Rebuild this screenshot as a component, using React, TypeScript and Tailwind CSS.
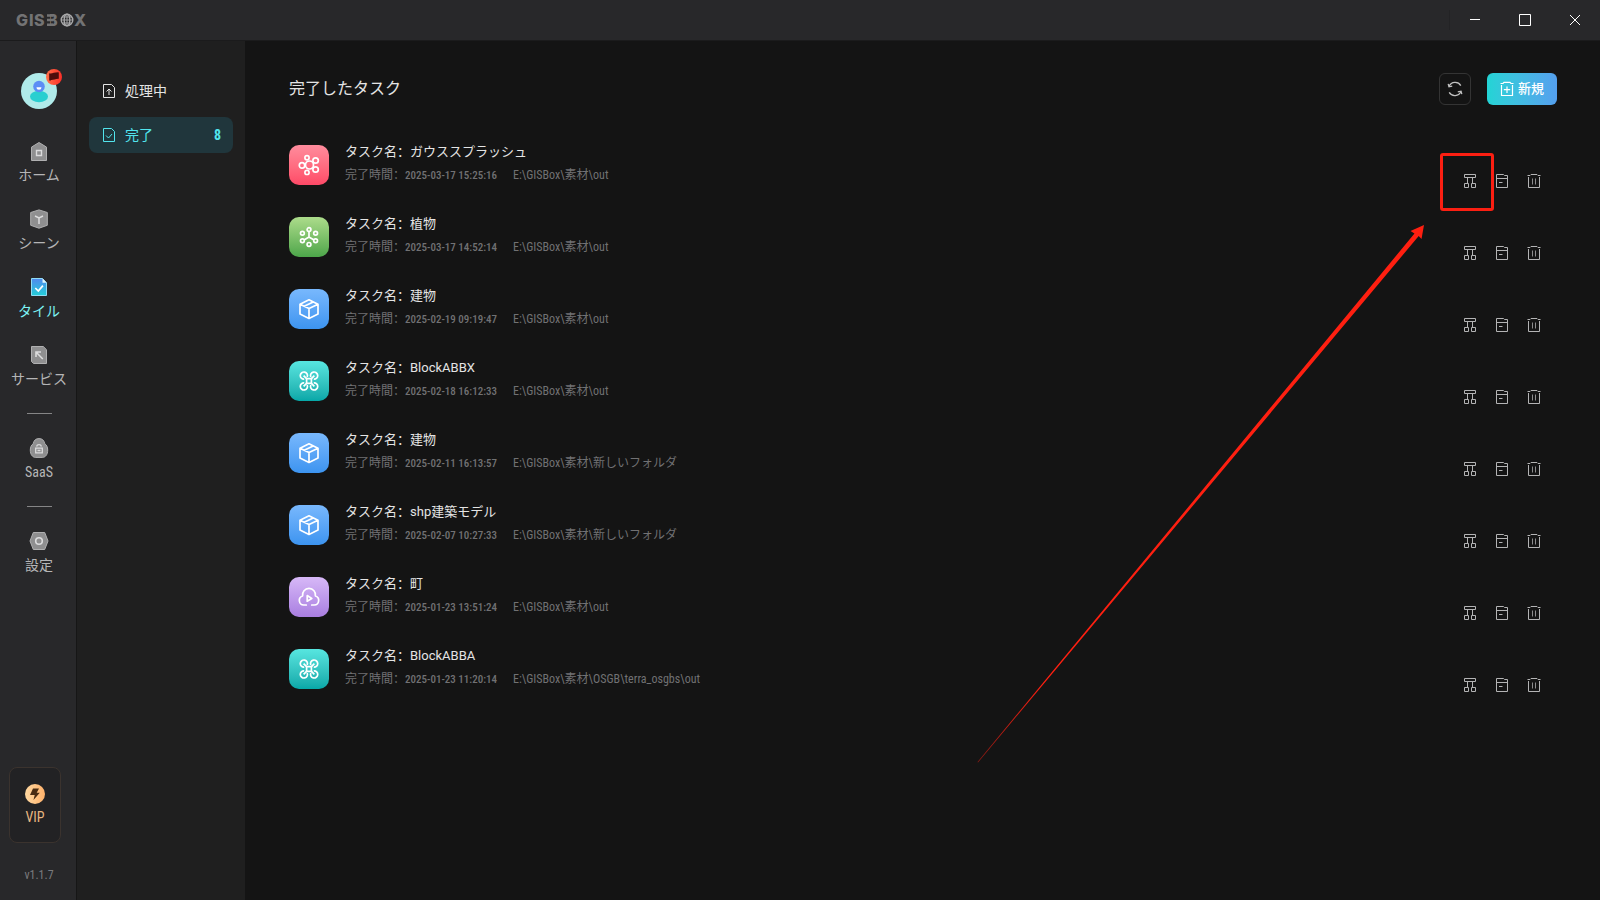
import React, { useState } from "react";

type TaskKind = "splat" | "plant" | "box" | "drone" | "cloud";

const TASKS: { id: number; kind: TaskKind; name: string; time: string; path: string }[] = [
  { id: 1, kind: "splat", name: "ガウススプラッシュ", time: "2025-03-17 15:25:16", path: "E:\\GISBox\\素材\\out" },
  { id: 2, kind: "plant", name: "植物", time: "2025-03-17 14:52:14", path: "E:\\GISBox\\素材\\out" },
  { id: 3, kind: "box", name: "建物", time: "2025-02-19 09:19:47", path: "E:\\GISBox\\素材\\out" },
  { id: 4, kind: "drone", name: "BlockABBX", time: "2025-02-18 16:12:33", path: "E:\\GISBox\\素材\\out" },
  { id: 5, kind: "box", name: "建物", time: "2025-02-11 16:13:57", path: "E:\\GISBox\\素材\\新しいフォルダ" },
  { id: 6, kind: "box", name: "shp建築モデル", time: "2025-02-07 10:27:33", path: "E:\\GISBox\\素材\\新しいフォルダ" },
  { id: 7, kind: "cloud", name: "町", time: "2025-01-23 13:51:24", path: "E:\\GISBox\\素材\\out" },
  { id: 8, kind: "drone", name: "BlockABBA", time: "2025-01-23 11:20:14", path: "E:\\GISBox\\素材\\OSGB\\terra_osgbs\\out" },
];

const KIND_BG: Record<TaskKind, string> = {
  splat: "from-[#ff8c9d] to-[#fe4967]",
  plant: "from-[#acdc8b] to-[#4ca64a]",
  box: "from-[#78b8fd] to-[#3c94f0]",
  drone: "from-[#57e6e0] to-[#05a8a8]",
  cloud: "from-[#d7b8f7] to-[#a97ee0]",
};

function KindIcon({ kind }: { kind: TaskKind }) {
  return (
    <svg viewBox="0 0 24 24" className="w-6 h-6" fill="none" stroke="#fff" strokeWidth="1.7" strokeLinejoin="round" aria-hidden="true">
      {kind === "splat" && (
        <>
          <circle cx="12.5" cy="12" r="4" />
          <circle cx="5" cy="12.4" r="2.7" />
          <circle cx="10" cy="4.8" r="2.1" />
          <circle cx="18.6" cy="7.5" r="2.7" />
          <circle cx="18.6" cy="16.5" r="2.7" />
          <circle cx="10" cy="19.4" r="2.1" />
        </>
      )}
      {kind === "plant" && (
        <>
          <circle cx="12" cy="4.6" r="1.9" />
          <circle cx="5.4" cy="8.2" r="1.9" />
          <circle cx="18.6" cy="8.2" r="1.9" />
          <circle cx="5.4" cy="15.8" r="1.9" />
          <circle cx="18.6" cy="15.8" r="1.9" />
          <circle cx="12" cy="19.4" r="1.9" />
          <path d="M12 6.5V12M12 12l-5 2.9M12 12l5 2.9" />
        </>
      )}
      {kind === "box" && (
        <path d="M12 2.8l9 4.4v9.8l-9 4.4-9-4.4V7.2zM3 7.2l9 4.2 9-4.2M12 11.4v10M7.2 9.2l9-4.3" />
      )}
      {kind === "drone" && (
        <>
          <path d="M9.6 9.6h4.8v4.8H9.6z" />
          <path d="M9.6 9.6L6.6 6.6M14.4 9.6l3-3M9.6 14.4l-3 3M14.4 14.4l3 3" />
          <path d="M10.2 8A3.6 3.6 0 1 0 7.2 10.2M13.8 8a3.6 3.6 0 1 1 3 2.2M10.2 16a3.6 3.6 0 1 1-3-2.2M13.8 16a3.6 3.6 0 1 0 3-2.2" />
        </>
      )}
      {kind === "cloud" && (
        <>
          <path d="M9.3 20H6.8A4.6 4.6 0 0 1 5.6 11a6.5 6.5 0 1 1 12.8 0 4.6 4.6 0 0 1-1.2 9h-2.5" strokeLinecap="round" />
          <path d="M10.2 10.6v5.6l4.6-2.8z" />
        </>
      )}
    </svg>
  );
}

function Logo() {
  return (
    <svg width="80" height="24" viewBox="0 0 80 24" role="img" aria-label="GISBOX">
      <g fill="#737374" fontFamily="Inter, sans-serif" fontWeight="800" fontSize="16">
        <text x="4" y="18">G</text>
        <text x="17" y="18">I</text>
        <text x="22" y="18">S</text>
        <text x="35" y="18">B</text>
        <text x="62" y="18">X</text>
      </g>
      {/* The B has no stem in the logo */}
      <path d="M34 5h4v14h-4z" fill="#28282a" />
      <g stroke="#737374" strokeWidth="2.4">
        <path d="M35 7.500h6M35 12h6M35 16.800h6" />
      </g>
      <circle cx="55" cy="12" r="7" fill="#28282a" />
      <g fill="none" stroke="#a8a8a9" strokeWidth="1.4">
        <circle cx="55" cy="12" r="5.800" />
        <ellipse cx="55" cy="12" rx="2.800" ry="5.800" />
        <path d="M55 6.200v11.600M49.200 12h11.600M50.200 9h9.600M50.200 15h9.600" strokeWidth="0.900" />
      </g>
    </svg>
  );
}

function RailIcon({ name }: { name: string }) {
  return (
    <svg width="20" height="20" viewBox="0 0 20 20" fill="none" aria-hidden="true">
      {name === "home" && (
        <>
          <path d="M10 1.500l7.500 4.600v13.400h-15V6.100z" fill="#8f8f90" stroke="#b0b0b1" />
          <path d="M7.500 9.500h5v5h-5z" stroke="#dcdcdd" strokeWidth="1.400" />
        </>
      )}
      {name === "scene" && (
        <>
          <path d="M10 .9l8.300 2.600v12.800L10 19.200l-8.300-2.900V3.500z" fill="#8f8f90" stroke="#b0b0b1" />
          <path d="M6 7l4 2 4-2M10 9v6" stroke="#dcdcdd" strokeWidth="1.500" />
        </>
      )}
      {name === "tile" && (
        <>
          <defs>
            <linearGradient id="tileFill" x1="0" y1="0" x2="0" y2="1">
              <stop offset="0" stopColor="#5189ee" />
              <stop offset="1" stopColor="#24cfd8" />
            </linearGradient>
          </defs>
          <path d="M2.500 1.500h11l4 4.200v12.800h-15z" fill="url(#tileFill)" stroke="#8fdcf5" />
          <path d="M13.500 1.500l4 4.200h-4z" fill="#e2f7fd" />
          <path d="M6.300 11l3 3 4.600-5.400" stroke="#fff" strokeWidth="1.700" />
        </>
      )}
      {name === "service" && (
        <>
          <path d="M2.500 1.500h11.800l3.200 3.200v13.800h-13l-2-2z" fill="#8f8f90" stroke="#b0b0b1" />
          <path d="M7 12V7h5M7.200 7.200l6.600 6.800" stroke="#dcdcdd" strokeWidth="1.600" />
        </>
      )}
      {name === "saas" && (
        <>
          <path d="M10 .6c3.400 0 5.200 2 5.700 5 2 1.500 3 3.500 3 6.400 0 4.600-2.300 7.400-5.200 7.400h-7c-2.900 0-5.200-2.800-5.200-7.400 0-2.900 1-4.900 3-6.400C4.800 2.600 6.600.6 10 .6z" fill="#8f8f90" stroke="#b0b0b1" />
          <path d="M6.700 10.200h6.600v4.600H6.700zM7.600 8.500c.5-2.400 4.300-2.400 4.800 0M8.500 12.500h3" stroke="#dcdcdd" strokeWidth="1.300" />
        </>
      )}
      {name === "settings" && (
        <>
          <path d="M4.300 1.500h11.400L19 10l-3.300 8.500H4.300L1 10z" fill="#8f8f90" stroke="#b0b0b1" />
          <circle cx="10" cy="10" r="3.300" stroke="#dcdcdd" strokeWidth="1.600" />
        </>
      )}
    </svg>
  );
}

function RailItem({ icon, label, active = false }: { icon: string; label: string; active?: boolean }) {
  return (
    <a href="#" className={`flex h-12 flex-col items-center gap-1 text-sm leading-5 whitespace-nowrap ${active ? "text-[#7df3f5]" : "text-[#b5b5b6]"}`}>
      <RailIcon name={icon} />
      <span>{label}</span>
    </a>
  );
}

function TreeIcon() {
  return (
    <svg width="12" height="14" viewBox="0 0 12 14" fill="none" stroke="currentColor" aria-hidden="true">
      <path d="M.5.5h11v3H.5zM3.500 3.500v6M8.500 3.500v6M.5 9.500h4v4h-4zM7.500 9.500h4v4h-4z" />
    </svg>
  );
}

function FileIcon() {
  return (
    <svg width="12" height="14" viewBox="0 0 12 14" fill="none" stroke="currentColor" aria-hidden="true">
      <path d="M.5.5h7l1 1h3v12H.5zM.5 4.500h11M3 8.500h3.500" />
    </svg>
  );
}

function TrashIcon() {
  return (
    <svg width="14" height="16" viewBox="0 0 14 16" fill="none" stroke="currentColor" aria-hidden="true">
      <path d="M.5 2.500h2.500L4 1.500h6l1 1h2.500M1.500 4v10.500h11V4" />
      <path d="M5.500 5.500v6M8.500 5.500v6" opacity=".75" />
    </svg>
  );
}

function AddIcon() {
  return (
    <svg width="14" height="16" viewBox="0 0 14 16" fill="none" stroke="#fff" strokeWidth="1.200" aria-hidden="true">
      <path d="M.5 2.500h2.500L4 1.400h6l1 1.100h2.500M1.500 4v10.500h11V4M7 5.500v6.500M3.800 8.700h6.400" />
    </svg>
  );
}

function RefreshIcon() {
  return (
    <svg width="16" height="16" viewBox="0 0 16 16" fill="none" stroke="#c2c2c2" strokeWidth="1.300" aria-hidden="true">
      <path d="M2 5.500C4.300.3 11.200.2 13.800 4.600M14 10.500C11.700 15.700 4.800 15.800 2.200 11.400" />
      <path d="M1.200 2.800l.8 3 3.200-.6M14.800 13.200l-.8-3-3.200.6" />
    </svg>
  );
}

export default function App() {
  const [tab, setTab] = useState("done");

  const tabClass = (id: string) =>
    `flex h-9 w-full items-center gap-2.5 rounded-lg pl-3.5 pr-3 text-sm ${
      tab === id ? "bg-[#20363c] text-[#52e5ee]" : "text-[#e4e4e4]"
    }`;

  return (
    <div className="flex min-h-screen flex-col bg-[#141414] font-['Roboto_Condensed','Noto_Sans_CJK_SC',sans-serif] text-[#e4e4e4]">
      {/* Title bar */}
      <header className="flex h-[41px] items-center justify-between border-b border-[#1b1b1c] bg-[#28282a] pl-3">
        <Logo />
        <div className="flex items-center">
          <div className="h-5 w-px bg-[#232325]" />
          <button aria-label="最小化" className="flex h-10 w-[50px] items-center justify-center">
            <svg width="12" height="12" viewBox="0 0 12 12" stroke="#fff"><path d="M1 5.500h10" /></svg>
          </button>
          <button aria-label="最大化" className="flex h-10 w-[50px] items-center justify-center">
            <svg width="12" height="12" viewBox="0 0 12 12" fill="none" stroke="#fff"><path d="M.5.5h11v11H.5z" /></svg>
          </button>
          <button aria-label="閉じる" className="flex h-10 w-[50px] items-center justify-center">
            <svg width="12" height="12" viewBox="0 0 12 12" stroke="#fff"><path d="M1 1l10 10M11 1L1 11" /></svg>
          </button>
        </div>
      </header>

      <div className="flex flex-1">
        {/* Main navigation */}
        <nav className="flex w-[77px] shrink-0 flex-col items-center border-r border-[#161616] bg-[#28282a] pt-8 pl-0.5">
          <button aria-label="アカウント" className="relative mb-8 size-9">
            <svg width="36" height="36" viewBox="0 0 36 36" aria-hidden="true">
              <circle cx="18" cy="18" r="18" fill="#b0ebea" />
              <ellipse cx="18" cy="23.500" rx="9" ry="5.800" fill="#29cfd0" />
              <circle cx="18" cy="13.500" r="5.800" fill="#5c8df5" />
              <path d="M15.500 14.300h5a2.500 2.500 0 0 1-5 0z" fill="#fff" />
            </svg>
            <svg className="absolute -top-1 -right-[5px]" width="16" height="16" viewBox="0 0 16 16" aria-hidden="true">
              <defs>
                <linearGradient id="flagFill">
                  <stop offset="0" stopColor="#ff7048" />
                  <stop offset="1" stopColor="#fb2f28" />
                </linearGradient>
              </defs>
              <circle cx="8" cy="8" r="8" fill="url(#flagFill)" />
              <path d="M3.200 4.300c3 .8 5-1.200 9.600-.9v6.400c-3.600-.2-5.600 1.700-8.300 1.200v1.200l-1.300-1z" fill="#4c0d0c" />
            </svg>
          </button>
          <div className="flex flex-col items-center gap-5">
            <RailItem icon="home" label="ホーム" />
            <RailItem icon="scene" label="シーン" />
            <RailItem icon="tile" label="タイル" active />
            <RailItem icon="service" label="サービス" />
            <div className="mb-1 h-px w-[25px] bg-[#858586]" />
            <RailItem icon="saas" label="SaaS" />
            <div className="mb-1 h-px w-[25px] bg-[#858586]" />
            <RailItem icon="settings" label="設定" />
          </div>
          <div className="mt-auto mb-[17px] flex w-full flex-col px-[7px]">
            <button className="flex h-[76px] w-[52px] flex-col items-center justify-center gap-1 rounded-lg border border-[#3b332e] bg-[#222224] text-sm leading-[18px] text-[#e8b681]">
              <svg width="20" height="20" viewBox="0 0 20 20" aria-hidden="true">
                <defs>
                  <linearGradient id="vipFill">
                    <stop offset="0" stopColor="#ffd9a2" />
                    <stop offset="1" stopColor="#ffb16a" />
                  </linearGradient>
                </defs>
                <circle cx="10" cy="10" r="10" fill="url(#vipFill)" />
                <path d="M8 4.500h6l-2.300 4.200h3.100L8.500 16l1.200-5H5z" fill="#4a2c12" />
              </svg>
              VIP
            </button>
            <span className="mt-6 text-center text-xs text-[#7b7b7e]">v1.1.7</span>
          </div>
        </nav>

        {/* Task status tabs */}
        <aside className="flex w-[168px] shrink-0 flex-col gap-2 bg-[#1f1f1f] px-3 pt-8">
          <button onClick={() => setTab("processing")} className={tabClass("processing")}>
            <svg width="12" height="14" viewBox="0 0 12 14" fill="none" stroke="currentColor" aria-hidden="true">
              <path d="M.5.5h8l3 3v10H.5zM6 11V5.500M3.500 7.500L6 5l2.500 2.500" />
            </svg>
            処理中
          </button>
          <button onClick={() => setTab("done")} className={tabClass("done")}>
            <svg width="12" height="14" viewBox="0 0 12 14" fill="none" stroke="currentColor" aria-hidden="true">
              <path d="M.5.5h8l3 3v10H.5zM3 7.500l2.500 2.500L9 6" />
            </svg>
            完了
            <span className="ml-auto font-bold">8</span>
          </button>
        </aside>

        {/* Completed tasks */}
        <main className="relative min-w-0 flex-1 pt-8 pr-[43px] pl-11">
          <div className="flex items-center justify-between">
            <h1 className="text-base">完了したタスク</h1>
            <div className="flex gap-4">
              <button aria-label="更新" className="flex size-8 items-center justify-center rounded-md border border-[#343434]">
                <RefreshIcon />
              </button>
              <button className="flex h-8 w-[70px] items-center justify-center gap-1 rounded-md bg-linear-to-r from-[#22d4d5] to-[#549fee] text-[13px] font-medium text-white">
                <AddIcon />
                新規
              </button>
            </div>
          </div>

          <ul className="mt-10">
            {TASKS.map((task) => (
              <li key={task.id} className="flex h-[72px] items-start gap-4">
                <div className={`flex size-10 shrink-0 items-center justify-center rounded-[10px] bg-linear-to-b ${KIND_BG[task.kind]}`}>
                  <KindIcon kind={task.kind} />
                </div>
                <div className="min-w-0 flex-1 whitespace-nowrap">
                  <p className="font-['Roboto','Noto_Sans_CJK_SC',sans-serif] text-[13px] leading-[14px]">
                    タスク名：{task.name}
                  </p>
                  <p className="mt-2.5 flex gap-4 text-xs leading-3 text-[#717173]">
                    <span>
                      完了時間：<span className="text-[11px] font-medium">{task.time}</span>
                    </span>
                    <span>{task.path}</span>
                  </p>
                </div>
                <div className="flex items-center self-stretch pr-[7px] text-[#b4b4b5]">
                  <button aria-label="ツリー" className="flex size-8 items-center justify-center">
                    <TreeIcon />
                  </button>
                  <button aria-label="フォルダを開く" className="flex size-8 items-center justify-center">
                    <FileIcon />
                  </button>
                  <button aria-label="削除" className="flex size-8 items-center justify-center">
                    <TrashIcon />
                  </button>
                </div>
              </li>
            ))}
          </ul>

          {/* Callout around the tree button of the first task */}
          <div className="pointer-events-none absolute top-28 right-[106px] h-[58px] w-[54px] rounded-[3px] border-3 border-[#fb1f12]" />
          <svg className="pointer-events-none absolute top-[184px] right-44" width="448" height="538" viewBox="0 0 448 538" aria-hidden="true">
            <defs>
              <linearGradient id="arrowFill" gradientUnits="userSpaceOnUse" x1="0" y1="538" x2="448" y2="0">
                <stop offset="0" stopColor="#ff1f10" stopOpacity="0.500" />
                <stop offset="0.150" stopColor="#ff1f10" />
              </linearGradient>
            </defs>
            <path d="M1.500 537L438.500 8.500 434.500 6 448 0l-2.500 14-2.800-3L2 537.400z" fill="url(#arrowFill)" />
          </svg>
        </main>
      </div>
    </div>
  );
}
